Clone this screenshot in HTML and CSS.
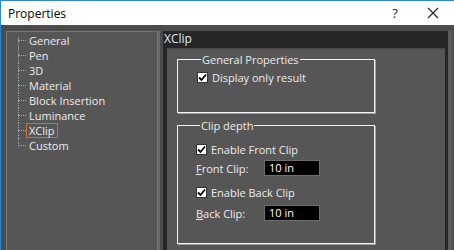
FILE: index.html
```html
<!DOCTYPE html>
<html>
<head>
<meta charset="utf-8">
<link rel="stylesheet" href="styles.css">
</head>
<body>
<div class="window">
  <div class="titlebar">
    <span class="title">Properties</span>
    <span class="tb-btn help">?</span>
    <span class="tb-btn close">
      <svg width="12" height="12" viewBox="0 0 12 12"><path d="M1 1 L11 11 M11 1 L1 11" stroke="#222" stroke-width="1.1" fill="none"/></svg>
    </span>
  </div>
  <div class="client">
    <div class="tree">
      <ul class="tree-list">
        <li class="item">General</li>
        <li class="item">Pen</li>
        <li class="item">3D</li>
        <li class="item">Material</li>
        <li class="item">Block Insertion</li>
        <li class="item">Luminance</li>
        <li class="item selected"><span class="focus">XClip</span></li>
        <li class="item last">Custom</li>
      </ul>
    </div>
    <div class="page">
      <div class="page-header">XClip</div>
      <div class="page-body">
        <fieldset class="group group-general">
          <legend>General Properties</legend>
          <label class="check"><span class="box"><svg width="9" height="9" viewBox="0 0 9 9"><path d="M1 4.5 L3.5 7 L8 1.5" stroke="#000" stroke-width="1.8" fill="none"/></svg></span>Display only result</label>
        </fieldset>
        <fieldset class="group group-clip">
          <legend>Clip depth</legend>
          <label class="check"><span class="box"><svg width="9" height="9" viewBox="0 0 9 9"><path d="M1 4.5 L3.5 7 L8 1.5" stroke="#000" stroke-width="1.8" fill="none"/></svg></span>Enable Front Clip</label>
          <div class="field"><span class="field-label"><u>F</u>ront Clip:</span><span class="input">10 in</span></div>
          <label class="check"><span class="box"><svg width="9" height="9" viewBox="0 0 9 9"><path d="M1 4.5 L3.5 7 L8 1.5" stroke="#000" stroke-width="1.8" fill="none"/></svg></span>Enable Back Clip</label>
          <div class="field field-back"><span class="field-label"><u>B</u>ack Clip:</span><span class="input">10 in</span></div>
        </fieldset>
      </div>
    </div>
  </div>
</div>
</body>
</html>
```
FILE: styles.css
```css
* { box-sizing: border-box; }
html, body { margin: 0; padding: 0; }
body {
  width: 454px;
  height: 250px;
  overflow: hidden;
  background: #565656;
  font-family: "Open Sans", "Noto Sans", sans-serif;
  font-size: 11px;
}
.window {
  width: 454px;
  height: 250px;
  border-top: 1px solid #2b88d8;
  border-left: 1px solid #2b88d8;
  display: flex;
  flex-direction: column;
  background: #565656;
}
.titlebar {
  height: 24px;
  background: #fff;
  display: flex;
  align-items: center;
  padding-left: 7px;
  flex: none;
}
.title {
  color: #000;
  font-size: 12px;
  flex: 1;
}
.tb-btn {
  width: 38px;
  display: flex;
  justify-content: center;
  align-items: center;
  color: #222;
}
.help { font-size: 13px; }
.close { width: 38px; margin-right: 2px; }
.client {
  flex: 1;
  display: flex;
  background: #4c4c4c;
  padding: 6px 6px 0 5px;
  min-height: 0;
}
.tree {
  width: 152px;
  flex: none;
  background: #565656;
  border: 1px solid #767676;
  border-bottom: none;
  box-shadow: 1px 0 0 #6a6a6a, 2px 0 0 #6a6a6a;
  padding: 1px 0 0 22px;
}
.tree-list {
  list-style: none;
  margin: 0;
  padding: 0;
}
.item {
  position: relative;
  height: 15px;
  line-height: 15px;
  color: #ececec;
  white-space: nowrap;
}
.item::before {
  content: "";
  position: absolute;
  left: -11px;
  top: 7px;
  width: 8px;
  border-top: 1px dotted #a8a8a8;
}
.item::after {
  content: "";
  position: absolute;
  left: -11px;
  top: 0;
  height: 15px;
  border-left: 1px dotted #a8a8a8;
}
.item:first-child::after { top: 4px; height: 11px; }
.item.last::after { height: 8px; }
.focus {
  display: inline-block;
  margin-left: -3px;
  padding: 0 2px;
  height: 15px;
  line-height: 13px;
  border: 1px solid #c0742c;
}
.page {
  flex: 1;
  margin-left: 5px;
  background: #262626;
  display: flex;
  flex-direction: column;
  padding: 0 3px 0 4px;
  box-shadow: 4px 0 0 #5c5c5c;
}
.page-header {
  height: 17px;
  line-height: 16px;
  color: #dfe8f5;
  margin-left: -4px;
  padding-left: 1px;
  font-size: 12px;
}
.page-body {
  flex: 1;
  background: #565656;
  border-top: 1px solid #484848;
  padding: 4px 70px 0 10px;
}
.group {
  margin: 0;
  padding: 0;
  border: 1px solid #f2f2f2;
  box-shadow: 1px 1px 0 #a0a0a0;
  color: #ececec;
}
.group legend {
  padding: 0 1px;
  margin-left: 4px;
  color: #ececec;
  line-height: 13px;
}
.group-general {
  height: 60px;
  padding: 4px 0 0 19px;
}
.group-clip {
  margin-top: 6px;
  height: 125px;
  padding: 10px 0 0 18px;
}
.check {
  display: flex;
  align-items: center;
  height: 15px;
  gap: 4px;
}
.box {
  width: 11px;
  height: 11px;
  background: #fff;
  border: 1px solid #333;
  display: flex;
  align-items: center;
  justify-content: center;
}
.field {
  display: flex;
  align-items: center;
  height: 16px;
  margin: 3px 0 9px 0;
}
.field-back { margin-top: 5px; }
.field-label {
  width: 68px;
}
.input {
  width: 56px;
  height: 16px;
  background: #000;
  border: 1px solid #6e6e6e;
  color: #fff;
  padding-left: 4px;
  line-height: 14px;
}
```
